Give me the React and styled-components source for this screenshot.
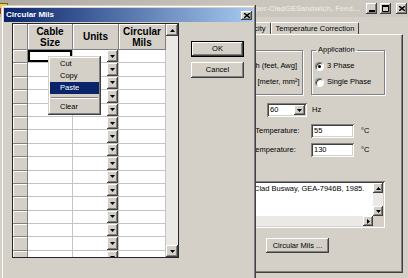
import React from 'react';
import styled, { createGlobalStyle } from 'styled-components';

const face = '#d4d0c8';
const shadow = '#808080';
const dark = '#404040';

const raised = `box-shadow: inset -1px -1px ${dark}, inset 1px 1px #fff, inset -2px -2px ${shadow}, inset 2px 2px ${face};`;
const sunken = `box-shadow: inset 1px 1px ${shadow}, inset -1px -1px #fff, inset 2px 2px ${dark}, inset -2px -2px ${face};`;

const GlobalStyle = createGlobalStyle`
  html, body { margin: 0; padding: 0; background: ${face}; }
  body {
    font-family: "Liberation Sans", Arial, sans-serif;
    font-size: 7.5px;
    line-height: 10px;
    color: #000;
  }
  * { box-sizing: border-box; }
`;

const Desktop = styled.div`
  position: relative;
  width: 408px;
  height: 278px;
  overflow: hidden;
  background: ${face};
`;

/* ---------- background (inactive) window ---------- */

const MainWindow = styled.div`
  display: flex;
  flex-direction: column;
  margin-left: -6px;
  width: 414px;
  height: 290px;
`;

const TitleBar = styled.div`
  display: flex;
  align-items: center;
  gap: 3px;
  height: 17px;
  padding: 0 1px 0 3px;
  background: linear-gradient(90deg, #aeaaa2, #c9c5bd 60%, #cdc9c1);
`;

const TitleText = styled.div`
  flex: 1;
  min-width: 0;
  white-space: nowrap;
  overflow: hidden;
  text-overflow: ellipsis;
  font-weight: bold;
  color: #e6e3de;
`;

const CaptionButton = styled.div`
  width: 11px;
  height: 11px;
  margin-left: ${({ $gap }) => $gap || 0}px;
  display: flex;
  align-items: center;
  justify-content: center;
  background: ${face};
  ${raised}
`;

const WindowBody = styled.div`
  flex: 1;
  display: flex;
  flex-direction: column;
  padding: 5px 5px 0 198px;
`;

const TabStrip = styled.div`
  display: flex;
  align-items: flex-end;
  height: 12px;
  padding-left: 1px;
`;

const Tab = styled.div`
  position: relative;
  z-index: ${({ $active }) => ($active ? 1 : 0)};
  height: ${({ $active }) => ($active ? 15 : 12)}px;
  margin-bottom: ${({ $active }) => ($active ? -1 : 0)}px;
  padding: 0 4px;
  display: flex;
  align-items: center;
  background: ${face};
  border: 1px solid #fff;
  border-right-color: ${dark};
  border-bottom: none;
  border-radius: 2px 2px 0 0;
  white-space: nowrap;
`;

const TabPanel = styled.div`
  height: 239px;
  display: flex;
  flex-direction: column;
  align-items: flex-start;
  padding: 10px 0 0 17px;
  border: 1px solid #fff;
  border-right-color: ${dark};
  border-bottom-color: ${dark};
  box-shadow: inset -1px -1px ${shadow};
`;

const GroupRow = styled.div`
  display: flex;
  gap: 8px;
  padding-left: 9px;
`;

const GroupBox = styled.fieldset`
  margin: 0;
  min-width: 0;
  width: ${({ $w }) => $w}px;
  padding: 3px 3px 4px 3px;
  border: 1px solid ${shadow};
  box-shadow: inset 1px 1px #fff, 1px 1px #fff;
`;

const Legend = styled.legend`
  margin-left: 1px;
  padding: 0 2px;
  line-height: 10px;
`;

const RadioRow = styled.label`
  display: flex;
  align-items: center;
  gap: 3px;
  height: 16px;
  white-space: nowrap;
`;

const Radio = styled.span`
  position: relative;
  flex: none;
  width: 9px;
  height: 9px;
  border-radius: 50%;
  background: #fff;
  border: 1px solid;
  border-color: ${shadow} #fff #fff ${shadow};
  box-shadow: inset 1px 1px ${dark};
  &::after {
    content: '';
    display: ${({ $checked }) => ($checked ? 'block' : 'none')};
    position: absolute;
    left: 2px;
    top: 2px;
    width: 3px;
    height: 3px;
    border-radius: 50%;
    background: #000;
  }
`;

const FormRow = styled.div`
  display: flex;
  align-items: center;
  height: 14px;
  margin-top: ${({ $top }) => $top}px;
`;

const FieldLabel = styled.span`
  width: ${({ $w }) => $w}px;
  padding-left: ${({ $indent }) => $indent || 0}px;
  white-space: nowrap;
`;

const Combo = styled.div`
  width: 40px;
  height: 14px;
  padding: 2px;
  display: flex;
  align-items: stretch;
  background: #fff;
  ${sunken}
`;

const ComboText = styled.span`
  flex: 1;
  padding-left: 1px;
  line-height: 10px;
`;

const DropButton = styled.div`
  width: ${({ $w }) => $w || 11}px;
  display: flex;
  align-items: center;
  justify-content: center;
  background: ${face};
  ${raised}
`;

const Unit = styled.span`
  margin-left: ${({ $gap }) => $gap}px;
`;

const TextBox = styled.div`
  width: 43px;
  height: 14px;
  padding: 2px 3px;
  background: #fff;
  ${sunken}
`;

const PlainLabel = styled.div`
  margin-top: 7px;
`;

const Memo = styled.div`
  margin-top: 7px;
  width: 175px;
  height: 47px;
  padding: 2px;
  display: grid;
  grid-template-columns: 1fr 10px;
  grid-template-rows: 1fr 10px;
  background: #fff;
  ${sunken}
`;

const MemoText = styled.div`
  padding: 1px 2px;
  white-space: nowrap;
  overflow: hidden;
`;

const ScrollBar = styled.div`
  display: flex;
  flex-direction: ${({ $horizontal }) => ($horizontal ? 'row' : 'column')};
  background: #ebe9e5;
`;

const ScrollButton = styled.div`
  flex: none;
  width: ${({ $size }) => $size || 10}px;
  height: ${({ $size }) => $size || 10}px;
  display: flex;
  align-items: center;
  justify-content: center;
  background: ${face};
  ${raised}
`;

const Track = styled.div`
  flex: 1;
`;

const Corner = styled.div`
  background: ${face};
`;

const PushButton = styled.div`
  width: ${({ $w }) => $w}px;
  height: ${({ $h }) => $h}px;
  margin: ${({ $m }) => $m || 0};
  display: flex;
  align-items: center;
  justify-content: center;
  white-space: nowrap;
  background: ${face};
  ${({ $default }) =>
    $default
      ? `border: 1px solid #000; box-shadow: inset -1px -1px ${dark}, inset 1px 1px #fff, inset -2px -2px ${shadow};`
      : raised}
`;

/* ---------- Circular Mils dialog ---------- */

const Dialog = styled.div`
  position: absolute;
  z-index: 5;
  left: 1px;
  top: 5px;
  width: 255px;
  height: 290px;
  padding: 3px;
  background: ${face};
  box-shadow: inset -1px -1px ${dark}, inset 1px 1px ${face}, inset -2px -2px ${shadow}, inset 2px 2px #fff;
`;

const DialogTitle = styled.div`
  display: flex;
  align-items: center;
  height: 14px;
  padding: 0 1px 0 2px;
  background: linear-gradient(90deg, #0a246a, #a6caf0);
  color: #fff;
  font-size: 8px;
  font-weight: bold;
`;

const CloseBox = styled.div`
  margin-left: auto;
  width: 11px;
  height: 9px;
  display: flex;
  align-items: center;
  justify-content: center;
  background: ${face};
  ${raised}
`;

const DialogBody = styled.div`
  display: flex;
  align-items: flex-start;
  gap: 12px;
  padding: 1px 0 0 8px;
`;

const GridFrame = styled.div`
  display: flex;
  width: 167px;
  height: 235px;
  border: 1px solid #262626;
  background: #fff;
`;

const Table = styled.div`
  width: 153px;
  display: flex;
  flex-direction: column;
`;

const columns = '15px 45px 46px 47px';

const HeaderRow = styled.div`
  display: grid;
  grid-template-columns: ${columns};
  height: 26px;
`;

const HeadCell = styled.div`
  display: flex;
  align-items: center;
  justify-content: center;
  text-align: center;
  background: ${face};
  border-right: 1px solid ${shadow};
  border-bottom: 1px solid ${shadow};
  box-shadow: inset 1px 1px #fff;
  font-size: 10px;
  line-height: 11px;
  font-weight: bold;
`;

const Rows = styled.div`
  flex: 1;
  overflow: hidden;
`;

const Row = styled.div`
  display: grid;
  grid-template-columns: ${columns};
  height: 13.4px;
`;

const RowHead = styled.div`
  background: ${face};
  border-right: 1px solid ${shadow};
  border-bottom: 1px solid ${shadow};
  box-shadow: inset 1px 1px #fff;
`;

const Cell = styled.div`
  display: flex;
  justify-content: flex-end;
  border-right: 1px solid #c4c4c4;
  border-bottom: 1px solid #c4c4c4;
  ${({ $focused }) => $focused && 'box-shadow: inset 0 0 0 2px #000;'}
`;

const ButtonColumn = styled.div`
  display: flex;
  flex-direction: column;
  gap: 5px;
  margin-top: 18px;
`;

/* ---------- context menu ---------- */

const Menu = styled.div`
  position: absolute;
  z-index: 10;
  left: 48px;
  top: 56px;
  width: 53px;
  padding: 2px;
  background: ${face};
  box-shadow: inset -1px -1px ${dark}, inset 1px 1px ${face}, inset -2px -2px ${shadow}, inset 2px 2px #fff;
`;

const MenuItem = styled.div`
  height: 12px;
  line-height: 12px;
  padding-left: 10px;
  background: ${({ $hover }) => ($hover ? '#0a246a' : 'transparent')};
  color: ${({ $hover }) => ($hover ? '#fff' : '#000')};
`;

const MenuSeparator = styled.div`
  height: 7px;
  padding-top: 3px;
  &::before {
    content: '';
    display: block;
    margin: 0 1px;
    border-top: 1px solid ${shadow};
    border-bottom: 1px solid #fff;
  }
`;

/* ---------- glyphs ---------- */

const Arrow = ({ dir = 'down', size = 5 }) => {
  const h = Math.ceil(size / 2);
  const pts = {
    down: `0,0 ${size},0 ${size / 2},${h}`,
    up: `0,${h} ${size},${h} ${size / 2},0`,
    right: `0,0 0,${size} ${h},${size / 2}`,
    left: `${h},0 ${h},${size} 0,${size / 2}`,
  }[dir];
  const vertical = dir === 'up' || dir === 'down';
  return (
    <svg width={vertical ? size : h} height={vertical ? h : size}>
      <polygon points={pts} fill="#000" />
    </svg>
  );
};

const AppIcon = () => (
  <svg width="11" height="11" viewBox="0 0 11 11">
    <rect x="0" y="0" width="11" height="11" fill="#f2d21a" />
    <rect x="1" y="5" width="4" height="5" fill="#d02020" />
    <rect x="6" y="2" width="4" height="8" fill="#2040c0" />
    <rect x="0.5" y="0.5" width="10" height="10" fill="none" stroke="#806000" />
  </svg>
);

const CloseGlyph = () => (
  <svg width="6" height="5" viewBox="0 0 6 5">
    <path d="M0 0 L6 5 M6 0 L0 5" stroke="#000" strokeWidth="1.4" />
  </svg>
);

const rows = Array.from({ length: 16 }, (_, i) => i);

const App = () => {
  return (
    <Desktop>
      <GlobalStyle />
      <MainWindow>
        <TitleBar>
          <AppIcon />
          <TitleText>
            Busway Impedance Calculator - [C:\Program Files\GE\Busway 2\Copper-CladGESandwich, Feederline.bwy]
          </TitleText>
          <CaptionButton>
            <svg width="6" height="6"><rect x="0" y="4" width="6" height="2" fill="#000" /></svg>
          </CaptionButton>
          <CaptionButton>
            <svg width="7" height="7"><path d="M0.5 1 H6.5 V6.5 H0.5 Z" fill="none" stroke="#000" /><rect x="0" y="0" width="7" height="2" fill="#000" /></svg>
          </CaptionButton>
          <CaptionButton $gap={2}>
            <CloseGlyph />
          </CaptionButton>
        </TitleBar>
        <WindowBody>
          <TabStrip>
            <Tab $active>General</Tab>
            <Tab>Ampacity</Tab>
            <Tab>Temperature Correction</Tab>
          </TabStrip>
          <TabPanel>
            <GroupRow>
              <GroupBox $w={84}>
                <Legend>Units</Legend>
                <RadioRow><Radio $checked />English (feet, Awg]</RadioRow>
                <RadioRow><Radio />Metric [meter, mm²]</RadioRow>
              </GroupBox>
              <GroupBox $w={74}>
                <Legend>Application</Legend>
                <RadioRow><Radio $checked />3 Phase</RadioRow>
                <RadioRow><Radio />Single Phase</RadioRow>
              </GroupBox>
            </GroupRow>
            <FormRow $top={8}>
              <FieldLabel $w={57}>Frequency:</FieldLabel>
              <Combo>
                <ComboText>60</ComboText>
                <DropButton><Arrow /></DropButton>
              </Combo>
              <Unit $gap={5}>Hz</Unit>
            </FormRow>
            <FormRow $top={7}>
              <FieldLabel $w={101} $indent={5}>Ambient Air Temperature:</FieldLabel>
              <TextBox>55</TextBox>
              <Unit $gap={7}>°C</Unit>
            </FormRow>
            <FormRow $top={5}>
              <FieldLabel $w={101} $indent={5}>Conductor Temperature:</FieldLabel>
              <TextBox>130</TextBox>
              <Unit $gap={7}>°C</Unit>
            </FormRow>
            <PlainLabel>Reference:</PlainLabel>
            <Memo>
              <MemoText>GE Copper-Clad Busway, GEA-7946B, 1985.</MemoText>
              <ScrollBar>
                <ScrollButton><Arrow dir="up" size={5} /></ScrollButton>
                <Track />
                <ScrollButton><Arrow dir="down" size={5} /></ScrollButton>
              </ScrollBar>
              <ScrollBar $horizontal>
                <ScrollButton><Arrow dir="left" size={5} /></ScrollButton>
                <Track />
                <ScrollButton><Arrow dir="right" size={5} /></ScrollButton>
              </ScrollBar>
              <Corner />
            </Memo>
            <PushButton $w={63} $h={15} $m="10px 0 0 56px">Circular Mils ...</PushButton>
          </TabPanel>
        </WindowBody>
      </MainWindow>

      <Dialog>
        <DialogTitle>
          Circular Mils
          <CloseBox><CloseGlyph /></CloseBox>
        </DialogTitle>
        <DialogBody>
          <GridFrame>
            <Table>
              <HeaderRow>
                <HeadCell />
                <HeadCell>Cable<br />Size</HeadCell>
                <HeadCell>Units</HeadCell>
                <HeadCell>Circular<br />Mils</HeadCell>
              </HeaderRow>
              <Rows>
                {rows.map((i) => (
                  <Row key={i}>
                    <RowHead />
                    <Cell $focused={i === 0} />
                    <Cell>
                      <DropButton><Arrow /></DropButton>
                    </Cell>
                    <Cell />
                  </Row>
                ))}
              </Rows>
            </Table>
            <ScrollBar>
              <ScrollButton $size={12}><Arrow dir="up" size={5} /></ScrollButton>
              <Track />
              <ScrollButton $size={12}><Arrow dir="down" size={5} /></ScrollButton>
            </ScrollBar>
          </GridFrame>
          <ButtonColumn>
            <PushButton $w={53} $h={16} $default>OK</PushButton>
            <PushButton $w={53} $h={16}>Cancel</PushButton>
          </ButtonColumn>
        </DialogBody>
      </Dialog>

      <Menu>
        <MenuItem>Cut</MenuItem>
        <MenuItem>Copy</MenuItem>
        <MenuItem $hover>Paste</MenuItem>
        <MenuSeparator />
        <MenuItem>Clear</MenuItem>
      </Menu>
    </Desktop>
  );
};

export default App;
